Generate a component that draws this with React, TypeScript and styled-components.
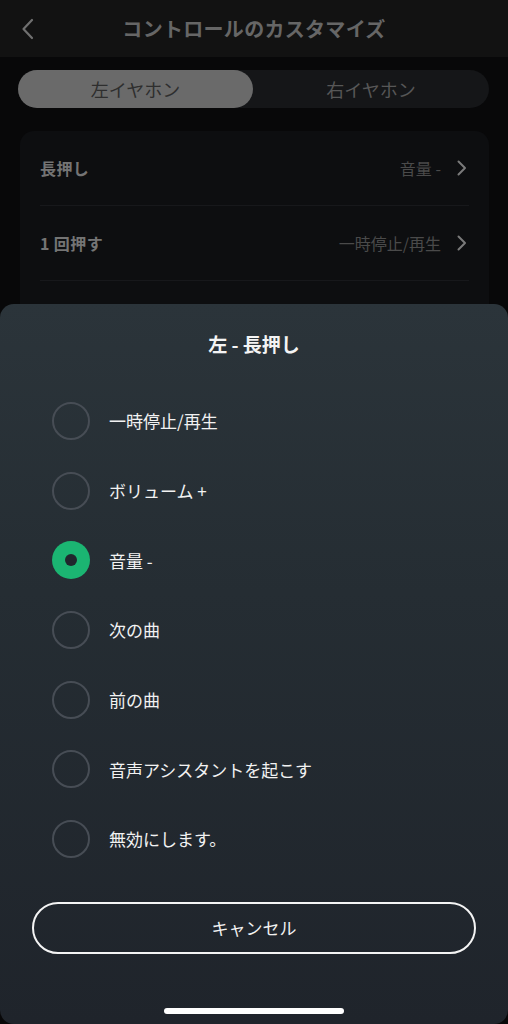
import React from "react";
import styled, { createGlobalStyle } from "styled-components";

const Global = createGlobalStyle`
  html, body { margin: 0; padding: 0; background: #080809; }
  body { font-family: "Noto Sans CJK JP", "Noto Sans", sans-serif; }
  * { box-sizing: border-box; }
`;

const Screen = styled.div`
  position: relative;
  width: 508px;
  height: 1024px;
  overflow: hidden;
  background: #080809;
`;

const Header = styled.header`
  height: 57px;
  background: #121212;
  display: grid;
  grid-template-columns: 56px 1fr 56px;
  align-items: center;
`;

const BackButton = styled.div`
  display: flex;
  align-items: center;
  justify-content: center;
`;

const Title = styled.h1`
  margin: 0;
  text-align: center;
  font-size: 20px;
  font-weight: 700;
  color: #666666;
  letter-spacing: 0.3px;
`;

const Content = styled.div`
  padding: 13px 19px 0 18px;
  display: flex;
  flex-direction: column;
  gap: 23px;
`;

const Segmented = styled.div`
  height: 38px;
  border-radius: 19px;
  background: #151618;
  display: grid;
  grid-template-columns: 235px 1fr;
`;

const Segment = styled.div<{ $active?: boolean }>`
  border-radius: 19px;
  display: flex;
  align-items: center;
  justify-content: center;
  font-size: 18px;
  background: ${(p) => (p.$active ? "#6a6a6a" : "transparent")};
  color: ${(p) => (p.$active ? "#2e2e2e" : "#575757")};
`;

const Card = styled.div`
  margin: 0 0 0 2px;
  background: #0d0e10;
  border-radius: 14px;
  padding: 0 20px;
  height: 200px;
`;

const Row = styled.div`
  height: 75px;
  display: flex;
  align-items: center;
  justify-content: space-between;
  border-bottom: 1px solid #17181b;
`;

const RowLabel = styled.span`
  font-size: 16px;
  font-weight: 700;
  color: #747474;
  letter-spacing: 0.4px;
`;

const RowValue = styled.span`
  display: flex;
  align-items: center;
  gap: 16px;
  font-size: 16px;
  color: #4a4a4a;
  padding-right: 2px;
`;

const Sheet = styled.div`
  position: absolute;
  left: 0;
  right: 0;
  top: 304px;
  bottom: 0;
  border-radius: 14px;
  background: linear-gradient(180deg, #2b343a 0%, #252d33 40%, #1f242b 100%);
  display: flex;
  flex-direction: column;
  align-items: stretch;
`;

const SheetTitle = styled.h2`
  margin: 28px 0 0;
  height: 24px;
  line-height: 24px;
  text-align: center;
  font-size: 19px;
  font-weight: 700;
  color: #f4f4f4;
`;

const Options = styled.div`
  margin-top: 30px;
  display: flex;
  flex-direction: column;
`;

const Option = styled.div`
  height: 69.7px;
  display: flex;
  align-items: center;
  padding-left: 52px;
  gap: 19px;
`;

const Radio = styled.span<{ $checked?: boolean }>`
  width: 38px;
  height: 38px;
  border-radius: 50%;
  flex: none;
  display: flex;
  align-items: center;
  justify-content: center;
  border: ${(p) => (p.$checked ? "none" : "2px solid #474d55")};
  background: ${(p) => (p.$checked ? "#1bb572" : "transparent")};
  &::after {
    content: "";
    display: ${(p) => (p.$checked ? "block" : "none")};
    width: 12px;
    height: 12px;
    border-radius: 50%;
    background: #20272d;
  }
`;

const OptionText = styled.span`
  font-size: 17px;
  color: #f2f2f2;
`;

const CancelButton = styled.button`
  margin: 28px 32px 0;
  height: 52px;
  border-radius: 26px;
  border: 2px solid #f4f4f4;
  background: transparent;
  color: #f2f2f2;
  font-family: inherit;
  font-size: 17px;
`;

const HomeBar = styled.div`
  margin: 54px auto 0;
  width: 180px;
  height: 6px;
  border-radius: 3px;
  background: #ffffff;
`;

const options = [
  "一時停止/再生",
  "ボリューム +",
  "音量 -",
  "次の曲",
  "前の曲",
  "音声アシスタントを起こす",
  "無効にします。",
];

const Chevron = () => (
  <svg width="10" height="16" viewBox="0 0 10 16" fill="none">
    <path d="M1.5 1.5 L8 8 L1.5 14.5" stroke="#7a7a7a" strokeWidth="2" strokeLinecap="round" strokeLinejoin="round" />
  </svg>
);

export default function App() {
  return (
    <Screen>
      <Global />
      <Header>
        <BackButton>
          <svg width="14" height="22" viewBox="0 0 14 22" fill="none">
            <path d="M11 2 L2.5 11 L11 20" stroke="#707070" strokeWidth="2.2" strokeLinecap="round" strokeLinejoin="round" />
          </svg>
        </BackButton>
        <Title>コントロールのカスタマイズ</Title>
        <div />
      </Header>
      <Content>
        <Segmented>
          <Segment $active>左イヤホン</Segment>
          <Segment>右イヤホン</Segment>
        </Segmented>
        <Card>
          <Row>
            <RowLabel>長押し</RowLabel>
            <RowValue>
              音量 -
              <Chevron />
            </RowValue>
          </Row>
          <Row>
            <RowLabel>1 回押す</RowLabel>
            <RowValue>
              一時停止/再生
              <Chevron />
            </RowValue>
          </Row>
        </Card>
      </Content>
      <Sheet>
        <SheetTitle>左 - 長押し</SheetTitle>
        <Options>
          {options.map((o) => (
            <Option key={o}>
              <Radio $checked={o === "音量 -"} />
              <OptionText>{o}</OptionText>
            </Option>
          ))}
        </Options>
        <CancelButton>キャンセル</CancelButton>
        <HomeBar />
      </Sheet>
    </Screen>
  );
}
